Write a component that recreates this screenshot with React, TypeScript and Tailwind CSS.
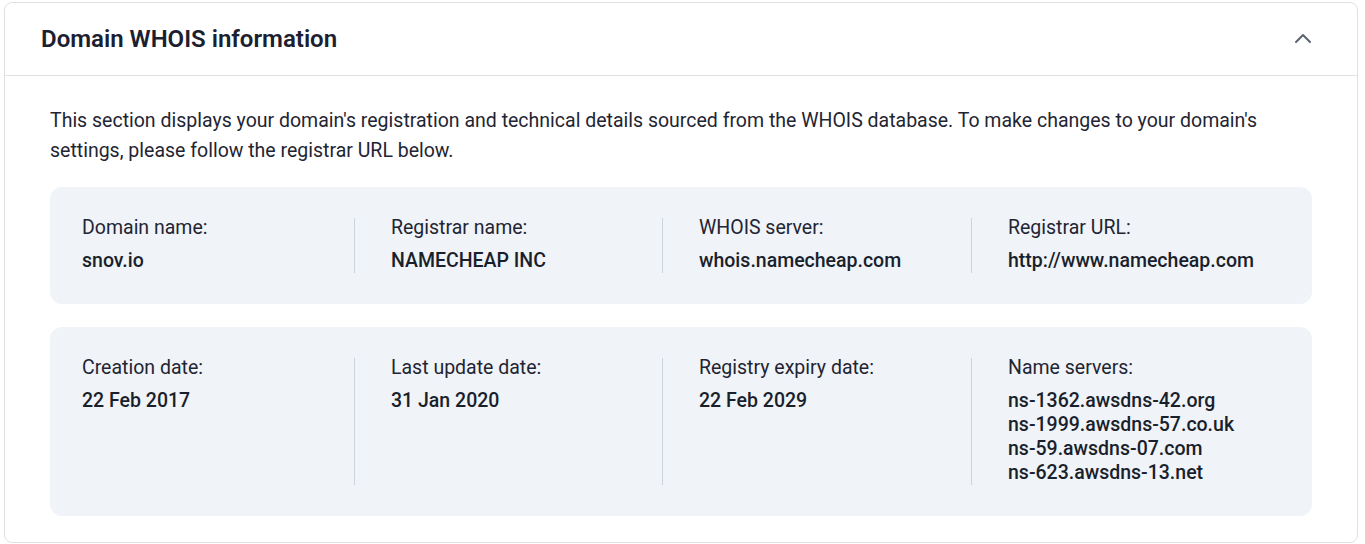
const rows = [
  [
    { label: 'Domain name:', values: ['snov.io'] },
    { label: 'Registrar name:', values: ['NAMECHEAP INC'] },
    { label: 'WHOIS server:', values: ['whois.namecheap.com'] },
    { label: 'Registrar URL:', values: ['http://www.namecheap.com'] },
  ],
  [
    { label: 'Creation date:', values: ['22 Feb 2017'] },
    { label: 'Last update date:', values: ['31 Jan 2020'] },
    { label: 'Registry expiry date:', values: ['22 Feb 2029'] },
    {
      label: 'Name servers:',
      values: [
        'ns-1362.awsdns-42.org',
        'ns-1999.awsdns-57.co.uk',
        'ns-59.awsdns-07.com',
        'ns-623.awsdns-13.net',
      ],
    },
  ],
]

function App() {
  return (
    <div className="min-h-screen bg-white pt-[2px] pl-[4px] pr-[7px] text-[#1c2230] [font-family:Roboto,'Liberation_Sans',sans-serif]">
      <div className="rounded-lg border border-[#dfe1e5] bg-white">
        <div className="flex h-[73px] items-center justify-between border-b border-[#dfe1e5] pl-[36px] pr-[45px]">
          <h2 className="text-[24px] font-semibold text-[#1b2030]">Domain WHOIS information</h2>
          <svg width="18" height="12" viewBox="0 0 18 12" fill="none" className="mt-[-2px]">
            <path d="M2 10L9 3L16 10" stroke="#5d6470" strokeWidth="2" strokeLinecap="round" strokeLinejoin="round" />
          </svg>
        </div>

        <div className="px-[45px] pt-[30px] pb-[26px]">
          <p className="text-[19.5px] leading-[30px] text-[#1f2533]">
            This section displays your domain's registration and technical details sourced from the WHOIS database. To make changes to your domain's settings, please follow the registrar URL below.
          </p>

          <div className="mt-[21px] flex flex-col gap-[23px]">
            {rows.map((row, i) => (
              <div key={i} className="rounded-xl bg-[#f0f3f8] py-[31px] pl-[32px]">
                <div className="grid grid-cols-[272px_308px_309px_308px]">
                  {row.map((col, j) => (
                    <div
                      key={col.label}
                      className={j === 0 ? '' : 'border-l border-[#cdd3dd] pl-[36px]'}
                    >
                      <div className="mt-[-2px] text-[19.5px] leading-[24px] text-[#1f2533]">{col.label}</div>
                      <div className="mt-[9px] text-[19.5px] font-medium leading-[24px] text-[#1a1f2c]">
                        {col.values.map((v) => (
                          <div key={v}>{v}</div>
                        ))}
                      </div>
                    </div>
                  ))}
                </div>
              </div>
            ))}
          </div>
        </div>
      </div>
    </div>
  )
}

export default App
